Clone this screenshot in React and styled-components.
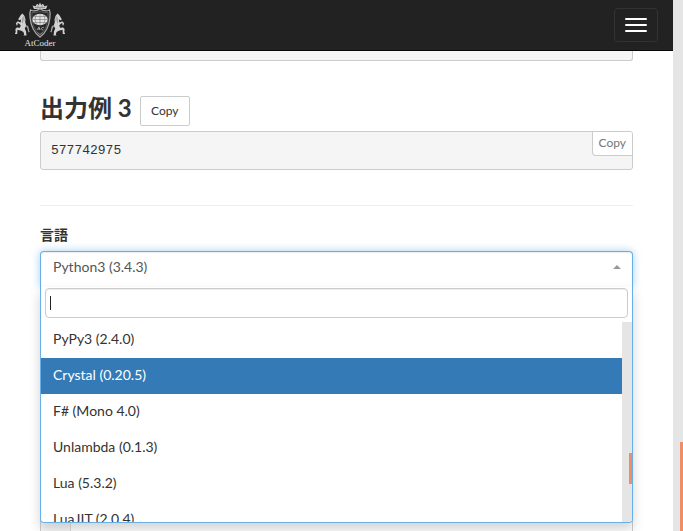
import React, { useState } from "react";
import styled, { createGlobalStyle } from "styled-components";

const GlobalStyle = createGlobalStyle`
  *, *::before, *::after { box-sizing: border-box; }
  body {
    margin: 0;
    overflow: hidden;
    background: #fff;
    color: #333;
    font: 14px/24px Lato, "Noto Sans CJK JP", sans-serif;
  }
  button, input { font: inherit; color: inherit; }
`;

const Screen = styled.div`
  display: grid;
  grid-template-columns: minmax(0, 1fr) 10px;
  height: 100vh;
`;

const Page = styled.div`
  display: flex;
  flex-direction: column;
  min-height: 0;
  overflow: hidden;
`;

const Track = styled.div`
  display: flex;
  flex-direction: column;
  align-items: flex-end;
  justify-content: flex-end;
  background: #e5e5e5;
`;

const Thumb = styled.div`
  width: 3px;
  height: ${(p) => p.$height};
  background: #f08d66;
`;

const Navbar = styled.header`
  flex: none;
  display: flex;
  align-items: center;
  justify-content: space-between;
  height: 51px;
  padding: 0 15px;
  background: #222;
  border-bottom: 1px solid #080808;
`;

const Brand = styled.a`
  display: flex;
  flex-direction: column;
  align-items: center;
  width: 50px;
  color: #e4e4e4;
  text-decoration: none;
`;

const BrandName = styled.span`
  font: 9px/10px "Liberation Serif", serif;
`;

const MenuButton = styled.button`
  display: flex;
  flex-direction: column;
  justify-content: center;
  gap: 4px;
  width: 44px;
  height: 34px;
  padding: 0 10px;
  background: transparent;
  border: 1px solid #333;
  border-radius: 4px;
`;

const MenuBar = styled.span`
  height: 2px;
  background: #fff;
  border-radius: 1px;
`;

const Content = styled.main`
  flex: none;
  display: flex;
  flex-direction: column;
  padding: 0 40px;
`;

const PreviousSample = styled.div`
  height: 10px;
  background: #f5f5f5;
  border: 1px solid #ccc;
  border-top: 0;
  border-radius: 0 0 3px 3px;
`;

const HeadingRow = styled.div`
  display: flex;
  align-items: flex-start;
  gap: 8px;
  margin: 35px 0 5px;
`;

const Heading = styled.h3`
  margin: 0;
  font-size: 24px;
  line-height: 24px;
  font-weight: 700;
`;

const CopyButton = styled.button`
  height: 30px;
  padding: 0 10px;
  min-width: 50px;
  font-size: 12px;
  line-height: 18px;
  background: #fff;
  border: 1px solid #ccc;
  border-radius: 2px;
`;

const SampleBox = styled.div`
  display: flex;
  align-items: flex-start;
  justify-content: space-between;
  height: 39px;
  background: #f5f5f5;
  border: 1px solid #ccc;
  border-radius: 3px;
`;

const SampleText = styled.pre`
  margin: 0;
  padding: 9px 10px;
  font: 13px/20px "Liberation Mono", monospace;
`;

const CornerCopy = styled.button`
  height: 24px;
  padding: 0 6px 2px;
  font-size: 12px;
  line-height: 20px;
  color: #767676;
  background: #fff;
  border: 0 solid #ccc;
  border-width: 0 0 1px 1px;
  border-radius: 0 2px 0 4px;
`;

const Divider = styled.hr`
  width: 100%;
  margin: 35px 0 17px;
  border: 0;
  border-top: 1px solid #eee;
`;

const Label = styled.label`
  font-weight: 700;
  line-height: 24px;
  margin-bottom: 4px;
`;

const Picker = styled.div`
  position: relative;
`;

const PickerButton = styled.button`
  display: flex;
  align-items: center;
  justify-content: space-between;
  width: 100%;
  height: 36px;
  padding: 0 11px 5px 12px;
  color: #555;
  background: #fff;
  border: 1px solid #66afe9;
  border-bottom: 0;
  border-radius: 4px 4px 0 0;
  box-shadow: inset 0 1px 1px rgba(0, 0, 0, 0.075), 0 0 8px rgba(102, 175, 233, 0.6);
`;

const Arrow = styled.span`
  border: solid transparent;
  border-width: 0 4px 4px;
  border-bottom-color: #999;
`;

const Menu = styled.div`
  position: absolute;
  top: 100%;
  left: 0;
  right: 0;
  overflow: hidden;
  background: #fff;
  border: 1px solid #66afe9;
  border-top: 0;
  border-radius: 0 0 4px 4px;
`;

const MenuShadow = styled.div`
  position: absolute;
  top: 100%;
  left: 0;
  right: 0;
  height: 236px;
  border-radius: 0 0 4px 4px;
  box-shadow: 0 6px 12px rgba(0, 0, 0, 0.175);
`;

const SearchWrap = styled.div`
  position: relative;
  padding: 1px 4px 4px;
`;

const SearchInput = styled.input`
  display: block;
  width: 100%;
  height: 30px;
  padding: 4px;
  background: #fff;
  border: 1px solid #ccc;
  border-radius: 4px;
  outline: 0;
  caret-color: transparent;
  box-shadow: inset 0 1px 1px rgba(0, 0, 0, 0.075);
`;

const Caret = styled.span`
  position: absolute;
  top: 9px;
  left: 9px;
  width: 1px;
  height: 14px;
  background: #222;
`;

const ListArea = styled.div`
  display: grid;
  grid-template-columns: minmax(0, 1fr) 10px;
  height: 200px;
`;

const Options = styled.ul`
  margin: 0;
  padding: 0;
  overflow: hidden;
  list-style: none;
`;

const Option = styled.li`
  padding: 5px 12px 7px;
  color: ${(p) => (p.$active ? "#fff" : "#333")};
  background: ${(p) => (p.$active ? "#337ab7" : "transparent")};
`;

const ListTrack = styled(Track)`
  padding-bottom: 38px;
`;

const Editor = styled.div`
  display: grid;
  grid-template-columns: 30px 1fr;
  height: 280px;
  margin-top: 15px;
  background: #fff;
  border: 1px solid #ccc;
`;

const Gutter = styled.div`
  background: #f7f7f7;
  border-right: 1px solid #ddd;
`;

function Horse() {
  return (
    <g fill="#d2d2d2">
      <path d="M7.500 9.500 9.200 11 11.800 15.200 10.800 16.300 8.800 15.600 9.500 18.500 12.200 17.200 14.200 19.200 13.300 21.600 12.400 21.200 12.600 19.500 11.500 19.200 9.300 21.200 10 23.800 13.200 23.500 14.600 25 14.300 28 15.200 30 12.800 30 12.500 25.800 8.800 26.800 6.600 28 5.800 30.200 6.500 31.500 3.500 31.500 4 27.200 5.200 24.800 3.800 21.500 4.800 18.300 4.500 15.500 5.500 12z" />
      <path d="M3.800 22C.8 22.500 2.600 25.800.8 28.200" fill="none" stroke="#a8a8a8" strokeWidth="1.300" />
      <path d="M6.300 12.500 5.900 17M7.200 13.500 7.600 19" fill="none" stroke="#858585" strokeWidth=".7" />
    </g>
  );
}

function Crest() {
  return (
    <svg width="50" height="36" viewBox="0 0 50 36" aria-hidden="true">
      <g transform="translate(15 2) scale(-1 1)"><Horse /></g>
      <g transform="translate(35 2)"><Horse /></g>
      <path d="M19 7 17.500 3.500 20.500 4.200 22 1.700l1.800 1.300L25 .5l1.200 2.500L28 1.700l1.500 2.500 3-.7L31 7z" fill="#cacaca" />
      <path d="M20 5.500h10M23 3.500v2M27 3.500v2" stroke="#777" strokeWidth=".6" />
      <path d="M25 6.800c-3 2.200-7 2.400-9.400 1.200-1.400 3-.8 5.800-.4 8.300.8 8.300 3.800 14.400 9.800 18.800 6-4.400 9-10.500 9.800-18.800.4-2.500 1-5.300-.4-8.300C32 9.200 28 9 25 6.800z" fill="#222" stroke="#aaa" strokeWidth="1.300" />
      <path d="M25 9c-2.600 1.700-5.800 2-8 1.300-.7 9 1.500 17.600 8 22.800 6.500-5.200 8.700-13.800 8-22.800-2.200.7-5.400.4-8-1.300z" fill="#292929" stroke="#777" strokeWidth=".6" />
      <ellipse cx="25" cy="17.500" rx="7.600" ry="5.700" fill="#e2e2e2" />
      <path d="M25 11.800v11.400M17.500 17.500h15M18.500 14.500h13M18.500 20.500h13M22 12.200c-2.500 3.500-2.500 7 0 10.600M28 12.200c2.500 3.500 2.500 7 0 10.600" fill="none" stroke="#777" strokeWidth=".6" />
      <path d="m22 28 2-3 1 3m-2-1h2M28.700 25.500c-2.500-.7-3.500 2.300-.4 2.400" fill="none" stroke="#bbb" strokeWidth=".8" />
      <path d="m22.500 30.500 2.500 2 2.500-2" fill="none" stroke="#999" strokeWidth=".8" />
    </svg>
  );
}

const languages = [
  "PyPy3 (2.4.0)",
  "Crystal (0.20.5)",
  "F# (Mono 4.0)",
  "Unlambda (0.1.3)",
  "Lua (5.3.2)",
  "LuaJIT (2.0.4)",
];

export default function App() {
  const [query, setQuery] = useState("");
  const [active, setActive] = useState("Crystal (0.20.5)");

  return (
    <>
      <GlobalStyle />
      <Screen>
        <Page>
          <Navbar>
            <Brand href="#">
              <Crest />
              <BrandName>AtCoder</BrandName>
            </Brand>
            <MenuButton type="button" aria-label="Menu">
              <MenuBar />
              <MenuBar />
              <MenuBar />
            </MenuButton>
          </Navbar>
          <Content>
            <PreviousSample />
            <HeadingRow>
              <Heading>出力例 3</Heading>
              <CopyButton type="button">Copy</CopyButton>
            </HeadingRow>
            <SampleBox>
              <SampleText>577742975</SampleText>
              <CornerCopy type="button">Copy</CornerCopy>
            </SampleBox>
            <Divider />
            <Label htmlFor="language">言語</Label>
            <Picker>
              <MenuShadow />
              <PickerButton id="language" type="button" aria-haspopup="listbox" aria-expanded="true">
                Python3 (3.4.3)
                <Arrow />
              </PickerButton>
              <Menu>
                <SearchWrap>
                  <SearchInput
                    type="search"
                    aria-label="言語"
                    value={query}
                    onChange={(e) => setQuery(e.target.value)}
                  />
                  {query === "" && <Caret />}
                </SearchWrap>
                <ListArea>
                  <Options role="listbox">
                    {languages.map((name) => (
                      <Option
                        key={name}
                        role="option"
                        aria-selected={name === active}
                        $active={name === active}
                        onMouseEnter={() => setActive(name)}
                      >
                        {name}
                      </Option>
                    ))}
                  </Options>
                  <ListTrack>
                    <Thumb $height="31px" />
                  </ListTrack>
                </ListArea>
              </Menu>
            </Picker>
            <Editor>
              <Gutter />
            </Editor>
          </Content>
        </Page>
        <Track>
          <Thumb $height="89px" />
        </Track>
      </Screen>
    </>
  );
}
